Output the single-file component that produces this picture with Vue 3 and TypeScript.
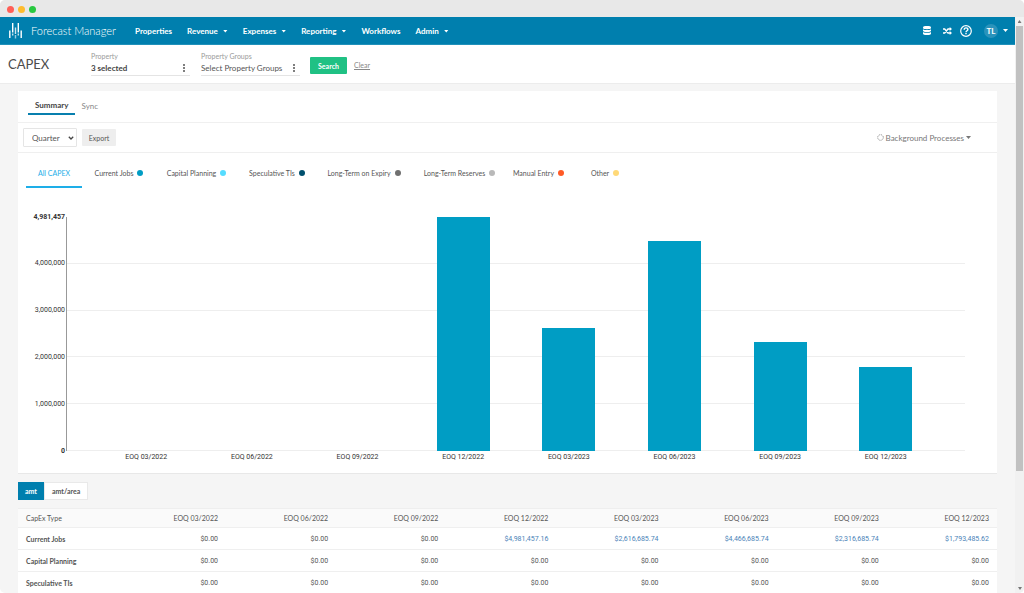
<script setup lang="ts">
import { ref } from 'vue'

interface NavItem { label: string; menu: boolean }
interface Category { label: string; color?: string }
interface Quarter { label: string; total: number }

const navItems: NavItem[] = [
  { label: 'Properties', menu: false },
  { label: 'Revenue', menu: true },
  { label: 'Expenses', menu: true },
  { label: 'Reporting', menu: true },
  { label: 'Workflows', menu: false },
  { label: 'Admin', menu: true },
]

const categories: Category[] = [
  { label: 'All CAPEX' },
  { label: 'Current Jobs', color: '#009dc4' },
  { label: 'Capital Planning', color: '#55dcff' },
  { label: 'Speculative TIs', color: '#00506e' },
  { label: 'Long-Term on Expiry', color: '#707070' },
  { label: 'Long-Term Reserves', color: '#b9b9b9' },
  { label: 'Manual Entry', color: '#ff5a26' },
  { label: 'Other', color: '#ffd978' },
]

const quarters: Quarter[] = [
  { label: 'EOQ 03/2022', total: 0 },
  { label: 'EOQ 06/2022', total: 0 },
  { label: 'EOQ 09/2022', total: 0 },
  { label: 'EOQ 12/2022', total: 4981457.16 },
  { label: 'EOQ 03/2023', total: 2616685.74 },
  { label: 'EOQ 06/2023', total: 4466685.74 },
  { label: 'EOQ 09/2023', total: 2316685.74 },
  { label: 'EOQ 12/2023', total: 1793485.62 },
]

const rows = [
  { label: 'Current Jobs', values: quarters.map((q) => q.total) },
  { label: 'Capital Planning', values: quarters.map(() => 0) },
  { label: 'Speculative TIs', values: quarters.map(() => 0) },
]

const max = Math.max(...quarters.map((q) => q.total))
const percent = (value: number): string => `${(value / max) * 100}%`
const money = (value: number): string =>
  '$' + value.toLocaleString('en-US', { minimumFractionDigits: 2, maximumFractionDigits: 2 })

const steps = [1000000, 2000000, 3000000, 4000000]
const bands = [
  ...steps.map((s) => ({ label: s.toLocaleString('en-US'), height: percent(1000000), top: false })),
  { label: Math.floor(max).toLocaleString('en-US'), height: percent(max - 4000000), top: true },
]

const activeCategory = ref('All CAPEX')
const period = ref('Quarter')
const property = ref('3 selected')
const groups = ref('')
</script>

<template>
  <div class="window">
    <div class="titlebar"><i class="light red"></i><i class="light amber"></i><i class="light green"></i></div>
    <div class="viewport">
      <div class="page">
        <header class="nav">
          <a class="brand" href="#">
            <svg class="logo" viewBox="0 0 13 17" aria-hidden="true">
              <g fill="none" stroke="#fff" stroke-width="1.4">
                <path d="M.8 8.500V16M3.700 1V10.500M9.300 1V10.500M12.200 8.500V16" />
                <path d="M3.700 11.500V13.500M6.500 5.500V12M9.300 11.500V13.500" stroke-opacity=".8" />
                <path d="M6.500 13V16.500" stroke-opacity=".6" />
              </g>
            </svg>
            <span>Forecast Manager</span>
          </a>
          <nav class="menu">
            <a v-for="item in navItems" :key="item.label" href="#">{{ item.label }}<i v-if="item.menu" class="caret"></i></a>
          </nav>
          <div class="tools">
            <button type="button" aria-label="Data">
              <svg width="8" height="9" viewBox="0 0 8 9"><g fill="#fff"><path d="M0 1.400C0 .5 1.500 0 4 0s4 .5 4 1.400v.6C8 2.800 6.500 3.200 4 3.200S0 2.800 0 2z" /><path d="M0 3.200c1 .7 2.400.8 4 .8s3-.1 4-.8v1.600c0 .8-1.500 1.200-4 1.200S0 5.600 0 4.800z" /><path d="M0 6c1 .7 2.400.8 4 .8S7 6.700 8 6v1.700C8 8.500 6.500 9 4 9S0 8.500 0 7.700z" /></g></svg>
            </button>
            <button type="button" aria-label="Shuffle">
              <svg width="9" height="8" viewBox="0 0 9 8"><path d="M0 2h1.700L5 6h2.200M0 6h1.700L5 2h2.200" fill="none" stroke="#fff" stroke-width="1.300" /><path d="M6.700 0L9 2 6.700 4zM6.700 4L9 6 6.700 8z" fill="#fff" /></svg>
            </button>
            <button type="button" aria-label="Help">
              <svg width="12" height="12" viewBox="0 0 12 12" fill="none" stroke="#fff"><circle cx="6" cy="6" r="5.300" stroke-width="1.200" /><path d="M4.200 4.700C4.200 3.500 5 2.900 6 2.900s1.900.6 1.900 1.600C7.900 5.800 6 5.700 6 7.200" stroke-width="1.400" /><path d="M6 8v1.300" stroke-width="1.400" /></svg>
            </button>
            <button type="button" class="user"><span class="avatar">TL</span><i class="caret"></i></button>
          </div>
        </header>

        <form class="filters" @submit.prevent>
          <h1>CAPEX</h1>
          <div class="field">
            <label for="property">Property</label>
            <div class="entry">
              <input id="property" v-model="property" class="strong" type="text" />
              <button type="button" aria-label="Choose property"><i></i><i></i><i></i></button>
            </div>
          </div>
          <div class="field">
            <label for="groups">Property Groups</label>
            <div class="entry">
              <input id="groups" v-model="groups" type="text" placeholder="Select Property Groups" />
              <button type="button" aria-label="Choose property groups"><i></i><i></i><i></i></button>
            </div>
          </div>
          <button class="search" type="submit">Search</button>
          <a class="clear" href="#">Clear</a>
        </form>

        <main>
          <section class="card">
            <div class="views">
              <button type="button" class="current">Summary</button>
              <button type="button">Sync</button>
            </div>
            <div class="toolbar">
              <div class="period">
                <select v-model="period" aria-label="Period"><option>Quarter</option><option>Month</option><option>Year</option></select>
                <svg width="6" height="4" viewBox="0 0 6 4" aria-hidden="true"><path d="M.8 .8L3 3 5.200 .8" fill="none" stroke="#444" stroke-width="1.300" /></svg>
              </div>
              <button type="button" class="export">Export</button>
              <button type="button" class="background">
                <svg width="7" height="7" viewBox="0 0 7 7" aria-hidden="true"><circle cx="3.500" cy="3.500" r="2.800" fill="none" stroke="#777" stroke-width="1" stroke-dasharray="1 1.200" /></svg>
                Background Processes<i class="caret"></i>
              </button>
            </div>
            <div class="categories">
              <button v-for="c in categories" :key="c.label" type="button" :class="{ active: c.label === activeCategory }" @click="activeCategory = c.label">
                {{ c.label }}<i v-if="c.color" class="dot" :style="{ background: c.color }"></i>
              </button>
            </div>
            <div class="chart">
              <div class="scale">
                <span class="tick zero"><b>0</b></span>
                <span v-for="b in bands" :key="b.label" class="tick" :class="{ top: b.top }" :style="{ height: b.height }"><b>{{ b.label }}</b></span>
              </div>
              <div class="plot">
                <div class="lines"><span v-for="b in bands" :key="b.label" :class="{ top: b.top }" :style="{ height: b.height }"></span></div>
                <div class="bars">
                  <span></span>
                  <div v-for="q in quarters" :key="q.label" class="bar" :style="{ height: percent(q.total) }"></div>
                </div>
              </div>
              <div class="bars names">
                <span></span>
                <span v-for="q in quarters" :key="q.label">{{ q.label }}</span>
              </div>
            </div>
          </section>

          <div class="units">
            <button type="button" class="on">amt</button>
            <button type="button">amt/area</button>
          </div>

          <table>
            <thead>
              <tr><th scope="col">CapEx Type</th><th v-for="q in quarters" :key="q.label" scope="col">{{ q.label }}</th></tr>
            </thead>
            <tbody>
              <tr v-for="row in rows" :key="row.label">
                <th scope="row">{{ row.label }}</th>
                <td v-for="(v, i) in row.values" :key="i"><a v-if="v" href="#">{{ money(v) }}</a><template v-else>{{ money(v) }}</template></td>
              </tr>
            </tbody>
          </table>
        </main>
      </div>
      <div class="scrollbar" aria-hidden="true"><i class="up"></i><div class="thumb"></div><i class="down"></i></div>
    </div>
  </div>
</template>

<style>
body { margin: 0; background: #fff; }
</style>

<style scoped>
* { box-sizing: border-box; }
.window { height: 100vh; display: flex; flex-direction: column; overflow: hidden; border-radius: 5px; background: #f5f5f5; color: #555; font: 8px/10px Lato, sans-serif; }
button, input, select { font: inherit; color: inherit; margin: 0; padding: 0; border: 0; background: none; outline: 0; }
button { cursor: pointer; white-space: nowrap; }
a { color: inherit; text-decoration: none; }
svg { display: block; flex: none; }
.titlebar { height: 17px; flex: none; background: #e8e8e8; display: flex; align-items: center; gap: 4px; padding: 1px 7px 0; }
.light { width: 7px; height: 7px; border-radius: 50%; }
.red { background: #ff5f57; }
.amber { background: #febc2e; }
.green { background: #28c840; }
.viewport { flex: 1; min-height: 0; display: flex; }
.page { flex: 1; min-width: 0; overflow: hidden; }
.caret { display: inline-block; width: 5px; height: 3px; background: currentColor; clip-path: polygon(0 0, 100% 0, 50% 100%); }

.nav { height: 28px; background: #007fae; border-bottom: 1px solid #2191ba; color: #fff; display: flex; align-items: center; padding: 0 7px 0 9px; }
.brand { display: flex; align-items: center; gap: 9px; width: 126px; font-size: 11px; font-weight: 300; white-space: nowrap; }
.logo { width: 13px; height: 17px; }
.menu { display: flex; gap: 15px; font-weight: 700; }
.menu a { display: flex; align-items: center; gap: 5px; }
.menu .caret { margin-top: 1px; }
.tools { margin-left: auto; display: flex; align-items: center; }
.tools button { display: flex; align-items: center; }
.tools button + button { margin-left: 12px; }
.tools button:nth-child(3) { margin-left: 8px; }
.tools .user { gap: 5px; }
.avatar { width: 14px; height: 14px; border-radius: 50%; background: #2a93bb; line-height: 14px; font-weight: 700; }

.filters { height: 39px; background: #fff; border-bottom: 1px solid #ececec; display: flex; align-items: flex-start; padding: 7px 8px 0; }
h1 { margin: 4px 0 0; width: 83px; font-size: 13px; line-height: 17px; font-weight: 400; color: #4c4c4c; }
.field { width: 99px; margin-right: 11px; }
.field label { display: block; font-size: 7px; line-height: 8px; color: #9a9a9a; }
.entry { display: flex; align-items: center; height: 16px; border-bottom: 1px solid #e4e4e4; }
.entry input { flex: 1; min-width: 0; height: 15px; color: #555; }
.entry input::placeholder { color: #555; opacity: 1; }
.entry .strong { color: #444; font-weight: 700; }
.entry button { width: 13px; height: 12px; display: flex; flex-direction: column; align-items: center; justify-content: center; gap: 1px; }
.entry i { width: 2px; height: 2px; border-radius: 50%; background: #555; }
.search { margin-top: 5px; width: 37px; height: 17px; background: #20c184; color: #fff; font-size: 7px; font-weight: 700; border-radius: 1px; }
.field + .search { margin-left: -1px; }
.clear { margin: 8px 0 0 7px; font-size: 7px; color: #888; text-decoration: underline; }

main { padding: 7px 18px 0; }
.card { background: #fff; border-bottom: 1px solid #e8e8e8; }
.views { height: 32px; border-bottom: 1px solid #f0f0f0; padding: 0 10px; display: flex; }
.views button { height: 24px; padding: 6px 6px 0 7px; color: #888; font-size: 8px; }
.views .current { color: #444; font-weight: 700; border-bottom: 2px solid #087fae; }
.toolbar { height: 30px; border-bottom: 1px solid #efefef; padding: 0 26px 0 5px; display: flex; align-items: center; gap: 5px; }
.period { display: grid; width: 54px; height: 19px; }
.period > * { grid-area: 1 / 1; }
.period select { appearance: none; border: 1px solid #e5e5e5; border-radius: 1px; padding: 0 8px; width: 100%; }
.period svg { place-self: center end; margin-right: 3px; pointer-events: none; }
.export { background: #eee; width: 34px; height: 17px; font-size: 7px; border-radius: 1px; }
.background { margin-left: auto; display: flex; align-items: center; gap: 2px; color: #777; }
.categories { display: grid; grid-template-columns: 56px 74px 81px 80px 94px 97px 61px 72px; height: 35px; padding-left: 8px; }
.categories button { display: flex; align-items: center; justify-content: center; gap: 4px; font-size: 7px; padding-top: 6px; border-bottom: 2px solid transparent; }
.categories .active { color: #1eaee8; border-color: #1eaee8; }
.dot { width: 6px; height: 6px; border-radius: 50%; }

.chart { display: grid; grid-template-columns: 48px 1fr; grid-template-rows: 234px 12px; padding: 29px 32px 10px 1px; color: #333; font: 7px/12px Roboto, "Liberation Sans", sans-serif; }
.scale { display: flex; flex-direction: column-reverse; border-right: 1px solid #999; text-align: right; padding-right: 1px; }
.tick { display: block; height: 0; line-height: 0; }
.tick b { font-weight: 400; }
.top b, .zero b { font-weight: 700; }
.plot { display: grid; }
.plot > * { grid-area: 1 / 1; }
.lines { display: flex; flex-direction: column-reverse; border-bottom: 1px solid #eee; }
.lines span { border-top: 1px solid #eee; }
.lines .top { border-color: transparent; }
.bars { display: grid; grid-template-columns: 1fr repeat(8, 4fr) 1fr; align-items: end; }
.bar { width: 50%; justify-self: center; background: #009dc4; }
.names { grid-column: 2; text-align: center; white-space: nowrap; }

.units { display: flex; margin: 8px 0; height: 18px; font-size: 7px; font-weight: 700; }
.units button { background: #fff; border: 1px solid #e9e9e9; padding: 0 7px; }
.units .on { background: #007fae; border-color: #007fae; color: #fff; padding: 0 6px; }

table { width: 100%; table-layout: fixed; border-collapse: collapse; background: #fff; text-align: right; font-size: 7px; }
th, td { padding: 0 8px; height: 22px; border-bottom: 1px solid #efefef; white-space: nowrap; }
th:first-child { text-align: left; width: 10%; }
thead th { height: 19px; font-weight: 400; background: #fafafa; border-top: 1px solid #eee; color: #555; }
td { font-family: Roboto, sans-serif; }
td a { color: #4a83b8; }

.scrollbar { width: 9px; flex: none; background: #f1f1f1; display: flex; flex-direction: column; align-items: center; padding: 3px 0; }
.scrollbar i { width: 4px; height: 3px; background: #777; clip-path: polygon(50% 0, 100% 100%, 0 100%); }
.scrollbar .down { margin-top: auto; transform: rotate(180deg); }
.thumb { width: 7px; height: 78%; margin-top: 3px; background: #c1c1c1; }
</style>
